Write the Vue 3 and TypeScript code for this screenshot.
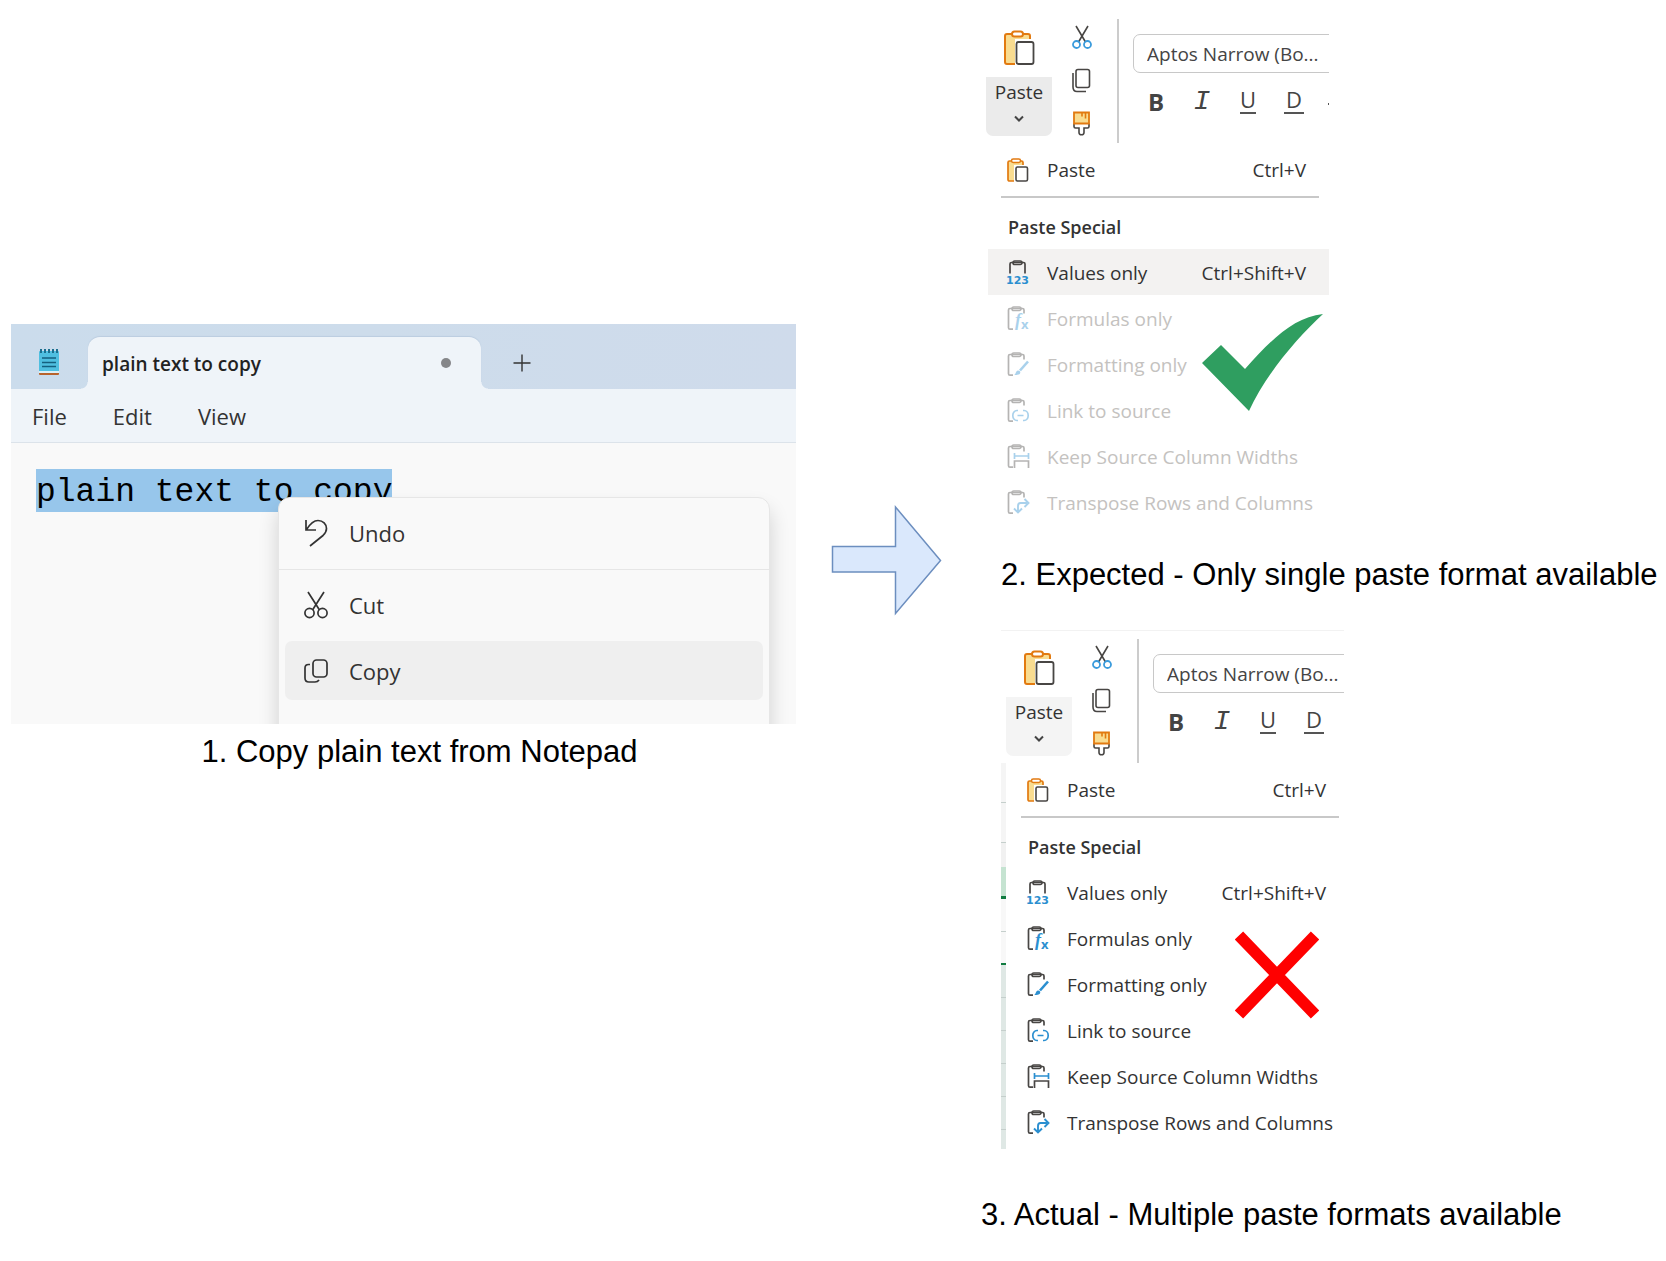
<script setup lang="ts">
type IconName = 'values' | 'formulas' | 'formatting' | 'link' | 'widths' | 'transpose'

interface PasteOption {
  icon: IconName
  label: string
  shortcut?: string
}

interface Panel {
  id: string
  caption: string
  single: boolean
}

const options: PasteOption[] = [
  { icon: 'values', label: 'Values only', shortcut: 'Ctrl+Shift+V' },
  { icon: 'formulas', label: 'Formulas only' },
  { icon: 'formatting', label: 'Formatting only' },
  { icon: 'link', label: 'Link to source' },
  { icon: 'widths', label: 'Keep Source Column Widths' },
  { icon: 'transpose', label: 'Transpose Rows and Columns' },
]

const panels: Panel[] = [
  { id: 'expected', caption: '2. Expected - Only single paste format available', single: true },
  { id: 'actual', caption: '3. Actual - Multiple paste formats available', single: false },
]
</script>

<template>
  <main class="page">
    <figure class="copy-step">
      <div class="notepad">
        <div class="titlebar">
          <svg class="app-icon" width="22" height="28" viewBox="0 0 22 28" aria-hidden="true">
            <rect x="1" y="23" width="20" height="4" rx="1" fill="#b8632c" />
            <rect x="1" y="3" width="20" height="22" rx="1" fill="#4fbfe0" />
            <path d="M1 23h20v2H1z" fill="#d8eff7" />
            <path d="M3 1v4M7 1v4M11 1v4M15 1v4M19 1v4" stroke="#1c6f8f" stroke-width="2" />
            <path d="M4 10h14M4 14.500h14M4 18.500h14" stroke="#14607f" stroke-width="1.600" />
          </svg>
          <div class="tab">
            <span>plain text to copy</span>
            <i class="unsaved"></i>
          </div>
          <button class="new-tab" aria-label="New tab">
            <svg width="18" height="18" viewBox="0 0 18 18"><path d="M9 .5v17M.5 9h17" stroke="#333" stroke-width="1.400" /></svg>
          </button>
        </div>
        <nav class="menubar">
          <button>File</button>
          <button>Edit</button>
          <button>View</button>
        </nav>
        <div class="editor">
          <span class="selection">plain text to copy</span>
          <div class="context" role="menu">
            <div class="group">
              <button role="menuitem">
                <svg width="24" height="28" viewBox="0 0 24 28"><path d="M2 1v10h10M2.500 10.500C6 5 9 1.500 14 1.500c5 0 8.500 3.500 8.500 8 0 3-1.500 5-3.500 7L6 27" /></svg>
                Undo
              </button>
            </div>
            <div class="group">
              <button role="menuitem">
                <svg width="24" height="28" viewBox="0 0 24 28"><path d="M4 1l11.500 18M20 1L8.500 19" /><circle cx="5.500" cy="22" r="4.600" /><circle cx="18.500" cy="22" r="4.600" /></svg>
                Cut
              </button>
              <button role="menuitem" class="hovered">
                <svg width="24" height="28" viewBox="0 0 24 28"><rect x="9" y="3" width="14" height="17" rx="3.500" /><path d="M6 7.500H4.500C2.500 7.500 1 9 1 11v10c0 2.500 1.500 4 4 4h6c2 0 3-.5 4-2" /></svg>
                Copy
              </button>
            </div>
          </div>
        </div>
      </div>
      <figcaption>1. Copy plain text from Notepad</figcaption>
    </figure>

    <svg class="arrow" width="111" height="112" viewBox="0 0 111 112" aria-hidden="true">
      <path d="M1.500 42.500H64.500V3L109.500 56.500 64.500 109.500V68H1.500z" fill="#dae8fc" stroke="#6c8ebf" stroke-width="1.500" />
    </svg>

    <div class="results">
      <figure v-for="panel in panels" :key="panel.id" :class="['result', panel.id]">
        <div class="panel">
          <div v-if="!panel.single" class="sheet">
            <i v-for="n in 10" :key="n"></i>
          </div>
          <div class="content">
            <div class="ribbon">
              <div class="paste">
                <button class="paste-main" aria-label="Paste">
                  <svg width="32" height="36" viewBox="0 0 32 36">
                    <rect x="2" y="4" width="25" height="30" rx="2" fill="#f9dc90" stroke="#e27a10" stroke-width="2" />
                    <rect x="9" y="1.500" width="11" height="5" rx="2.500" fill="#fff" stroke="#e27a10" stroke-width="2" />
                    <rect x="12" y="9" width="20" height="27" fill="#fff" />
                    <rect x="13.500" y="12" width="17" height="22" rx="2" fill="#fff" stroke="#484644" stroke-width="1.800" />
                  </svg>
                </button>
                <button class="paste-menu">
                  Paste
                  <svg width="10" height="8" viewBox="0 0 10 8"><path d="M1 1.500l4 4 4-4" fill="none" stroke="#444" stroke-width="2" /></svg>
                </button>
              </div>
              <div class="clip-tools">
                <button aria-label="Cut">
                  <svg width="20" height="25" viewBox="0 0 20 25">
                    <path d="M4 1l9.500 16M16 1L6.500 17" stroke="#484644" stroke-width="1.600" />
                    <circle cx="4.500" cy="19.500" r="3.500" fill="#fff" stroke="#3a9bdc" stroke-width="1.800" />
                    <circle cx="15.500" cy="19.500" r="3.500" fill="#fff" stroke="#3a9bdc" stroke-width="1.800" />
                  </svg>
                </button>
                <button aria-label="Copy">
                  <svg width="20" height="25" viewBox="0 0 20 25" fill="none" stroke="#484644" stroke-width="1.600">
                    <rect x="4" y="1.500" width="13.500" height="18" rx="2" />
                    <path d="M1 5v14c0 2.500 1.500 4.500 4 4.500h9" />
                  </svg>
                </button>
                <button aria-label="Format Painter">
                  <svg width="20" height="25" viewBox="0 0 20 25">
                    <path d="M2 12.500v3c0 1 .7 1.500 1.500 1.500H7v4.500c0 1.500 1 2.300 2.500 2.300s2.500-.8 2.500-2.300V17h3.500c.8 0 1.500-.5 1.500-1.500v-3" fill="#fff" stroke="#484644" stroke-width="1.600" />
                    <path d="M2 1.500h15v11H2z" fill="#f9dc90" stroke="#e27a10" stroke-width="1.800" />
                    <path d="M10 1.500v4M13.500 1.500v6" stroke="#e27a10" stroke-width="1.600" />
                  </svg>
                </button>
              </div>
              <div class="font-tools">
                <select class="font-name" aria-label="Font">
                  <option>Aptos Narrow (Bo...</option>
                </select>
                <div class="styles">
                  <button class="bold">B</button>
                  <button class="italic">I</button>
                  <button class="underline"><span>U</span></button>
                  <button class="double"><span>D</span></button>
                  <button aria-label="Strikethrough">
                    <svg width="24" height="24" viewBox="0 0 24 24"><path d="M0 14h24" stroke="#555" stroke-width="2" /></svg>
                  </button>
                </div>
              </div>
            </div>

            <div class="menu" role="menu">
              <button class="item first" role="menuitem">
                <svg width="24" height="24" viewBox="0 0 24 24">
                  <rect x="2" y="3" width="15" height="20" rx="1.500" fill="#f9dc90" stroke="#e27a10" stroke-width="1.700" />
                  <rect x="5.500" y="1" width="9" height="3.500" rx="1.700" fill="#fff" stroke="#e27a10" stroke-width="1.500" />
                  <rect x="8" y="7" width="16" height="17" fill="#fff" />
                  <rect x="10" y="9" width="11.500" height="14" rx="1.500" fill="#fff" stroke="#484644" stroke-width="1.600" />
                </svg>
                <span>Paste</span>
                <kbd>Ctrl+V</kbd>
              </button>
              <hr />
              <h3>Paste Special</h3>
              <button
                v-for="(option, index) in options"
                :key="option.icon"
                :class="['item', 'option', { hovered: panel.single && index === 0 }]"
                :disabled="panel.single && index > 0"
                role="menuitem"
              >
                <svg class="special" width="24" height="24" viewBox="0 0 24 24">
                  <template v-if="option.icon === 'values'">
                    <path d="M4 13.500V4c0-1 .5-1.500 1.500-1.500h12c1 0 1.500.5 1.500 1.500v9.500" />
                    <rect x="7" y="1" width="9" height="3.500" rx="1.700" />
                    <text x="0" y="24" class="digits">123</text>
                  </template>
                  <template v-else>
                    <path d="M7 23.200H4c-1 0-1.500-.5-1.500-1.500V4c0-1 .5-1.500 1.500-1.500h12.500c1 0 1.500.5 1.500 1.500v3.500" />
                    <rect x="6" y="1" width="9" height="3.500" rx="1.700" />
                  </template>
                  <text v-if="option.icon === 'formulas'" x="9" y="20" class="fx">f<tspan class="sub" dy="3">x</tspan></text>
                  <g v-if="option.icon === 'formatting'" class="accent">
                    <path d="M22 9.500l-8 9" stroke-width="2.600" />
                    <path d="M8 23c2 0 1.500-4.500 4-4.500 2 0 2.800 1.500 2 3-.8 1.300-3 1.500-6 1.500z" class="solid" />
                  </g>
                  <g v-if="option.icon === 'link'" class="accent">
                    <path d="M12 12.500h-1c-2.500 0-4.200 2.200-4.200 5s1.700 5 4.200 5h1M17 12.500h1c2.500 0 4.200 2.200 4.200 5s-1.700 5-4.200 5h-1M11.500 17.500h6" />
                  </g>
                  <template v-if="option.icon === 'widths'">
                    <path d="M8.500 24v-7h14v7" />
                    <path class="accent" d="M8.500 9v6M22.500 9v6M8.500 12h14" />
                  </template>
                  <g v-if="option.icon === 'transpose'" class="accent">
                    <path d="M12 21.500V16c0-2 .8-3 2.500-3H21M18.500 9l4 4-4 4M8 18.500l4 4 4-4" stroke-width="1.900" />
                  </g>
                </svg>
                <span>{{ option.label }}</span>
                <kbd v-if="option.shortcut">{{ option.shortcut }}</kbd>
              </button>
            </div>
          </div>

          <svg v-if="panel.single" class="verdict check" width="122" height="98" viewBox="0 0 122 98" aria-label="Correct">
            <path d="M0 49l19-18 24 24C67 28 91 3 121 0 95 24 64 60 47 97z" fill="#2f9e60" />
          </svg>
          <svg v-else class="verdict cross" width="84" height="88" viewBox="0 0 84 88" aria-label="Incorrect">
            <path d="M4 4.500l76 79M80 4.500l-76 79" stroke="#f00" stroke-width="11.500" />
          </svg>
        </div>
        <figcaption>{{ panel.caption }}</figcaption>
      </figure>
    </div>
  </main>
</template>

<style>
body {
  margin: 0;
  background: #fff;
}
</style>

<style scoped>
.page {
  display: grid;
  grid-template-columns: minmax(0, 1fr) 115px 685px;
  column-gap: 35px;
  align-items: start;
  padding: 10px 0 16px 11px;
  overflow: hidden;
  color: #333;
  font-family: "Open Sans", "Noto Sans", sans-serif;
}
button {
  display: flex;
  flex: none;
  align-items: center;
  margin: 0;
  padding: 0;
  border: 0;
  background: none;
  color: inherit;
  font: inherit;
  text-align: left;
}
svg {
  display: block;
  flex: none;
}
figure {
  margin: 0;
}
figcaption {
  color: #000;
  font: 31px/36px "Liberation Sans", Arial, sans-serif;
  white-space: nowrap;
}

/* Notepad window */
.copy-step {
  margin-top: 314px;
}
.copy-step figcaption {
  margin: 10px 0 0 32px;
  text-align: center;
}
.notepad {
  background: #f9f9f9;
}
.titlebar {
  display: flex;
  align-items: flex-end;
  height: 65px;
  background: linear-gradient(90deg, #cbdcec, #cddceb 45%, #cfdbeb);
}
.app-icon {
  margin: 0 28px 13px 27px;
}
.tab {
  position: relative;
  display: flex;
  align-items: center;
  justify-content: space-between;
  box-sizing: border-box;
  width: 393px;
  height: 52px;
  padding: 0 30px 0 14px;
  border-radius: 12px 12px 0 0;
  background: #eff4f9;
  box-shadow: 0 -1px 1px #bccde0;
  color: #222;
  font-size: 19px;
  font-weight: 600;
}
.tab span {
  padding-top: 2px;
}
.tab::before,
.tab::after {
  content: "";
  position: absolute;
  bottom: 0;
  width: 7px;
  height: 7px;
}
.tab::before {
  right: 100%;
  background: radial-gradient(circle at 0 0, transparent 6px, #eff4f9 7px);
}
.tab::after {
  left: 100%;
  background: radial-gradient(circle at 100% 0, transparent 6px, #eff4f9 7px);
}
.unsaved {
  width: 10px;
  height: 10px;
  border-radius: 50%;
  background: #858689;
}
.new-tab {
  justify-content: center;
  width: 67px;
  height: 52px;
  margin-left: 7px;
}
.menubar {
  display: flex;
  gap: 46px;
  height: 53px;
  padding-left: 21px;
  border-bottom: 1px solid #dce3ea;
  background: #eff4f9;
  font-size: 22px;
}
.editor {
  position: relative;
  box-sizing: border-box;
  min-height: 281px;
  padding: 26px 25px;
  overflow: hidden;
}
.selection {
  display: inline-block;
  padding-top: 4px;
  background: #97c6eb;
  color: #000;
  font: 33px/39px "Liberation Mono", monospace;
  white-space: nowrap;
}
.context {
  position: absolute;
  top: 54px;
  right: 26px;
  left: 267px;
  height: 260px;
  border: 1px solid #e6e6e6;
  border-radius: 12px;
  background: #f9f9f9;
  box-shadow: 0 12px 20px rgba(0, 0, 0, 0.16);
  font-size: 22px;
}
.group {
  padding: 5px 6px 7px;
}
.group + .group {
  border-top: 1px solid #e6e6e6;
}
.group button {
  gap: 21px;
  box-sizing: border-box;
  width: 100%;
  height: 59px;
  padding-left: 19px;
  border-radius: 7px;
}
.group + .group button + button {
  margin-top: 7px;
}
.group svg {
  fill: none;
  stroke: #333;
  stroke-width: 1.7;
}
.hovered {
  background: #efefef;
}

.arrow {
  margin-top: 494px;
}

/* Paste menus */
.panel {
  position: relative;
  display: flex;
  box-sizing: border-box;
  width: 343px;
  height: 519px;
  border-top: 1px solid transparent;
}
.expected .panel {
  margin-left: 5px;
}
.expected figcaption {
  margin: 28px 0 37px 20px;
}
.actual .panel {
  margin-left: 20px;
  border-color: #f2f2f2;
}
.actual figcaption {
  margin-top: 48px;
}
.sheet {
  display: flex;
  flex-direction: column;
  width: 5px;
  margin-top: 132px;
  background: #dfe8e5;
}
.sheet i {
  box-sizing: border-box;
  height: 33px;
  border-bottom: 1px solid #c5cfcc;
}
.sheet i:nth-child(-n + 2) {
  height: 40px;
  background: #f5f5f5;
}
.sheet i:nth-child(3) {
  height: 56px;
  border-bottom: 3px solid #107c41;
  background: linear-gradient(#f1f1f1 24px, #c5e3d1 24px);
}
.sheet i:nth-child(4) {
  background: #f8f8f8;
}
.sheet i:nth-child(5) {
  border-bottom: 2px solid #107c41;
  background: #f8f8f8;
}
.content {
  flex: 1;
  min-width: 0;
  padding-top: 8px;
  overflow: hidden;
}
.ribbon {
  display: flex;
  height: 124px;
}
.paste {
  flex: none;
  width: 66px;
}
.paste-main {
  justify-content: center;
  width: 100%;
  height: 58px;
}
.paste-menu {
  flex-direction: column;
  gap: 10px;
  width: 100%;
  height: 59px;
  padding-top: 2px;
  border-radius: 0 0 7px 7px;
  background: #ebebeb;
  font-size: 19px;
  line-height: 26px;
}
.actual .paste-menu {
  background: #f4f4f4;
}
.clip-tools {
  display: flex;
  flex: none;
  flex-direction: column;
  gap: 18px;
  padding: 6px 25px 0 20px;
  border-right: 2px solid #ccc;
}
.font-tools {
  flex: none;
  width: 230px;
  padding: 15px 0 0 14px;
}
.font-name {
  display: block;
  box-sizing: border-box;
  width: 100%;
  height: 39px;
  padding: 2px 0 0 13px;
  border: 1px solid #c8c8c8;
  border-radius: 7px;
  appearance: none;
  background: #fff;
  color: #444;
  font: 19px/35px "Open Sans", "Noto Sans", sans-serif;
}
.styles {
  display: flex;
  gap: 16px;
  margin-top: 15px;
  padding-left: 8px;
  color: #444;
  line-height: 28px;
}
.styles button {
  justify-content: center;
  width: 30px;
  height: 28px;
}
.bold {
  font-size: 24px;
  font-weight: 700;
}
.italic {
  font-family: "Liberation Mono", monospace;
  font-size: 28px;
  font-style: italic;
}
.underline span,
.double span {
  height: 21px;
  border-bottom: 2px solid #555;
  font-size: 22px;
  line-height: 16px;
  text-align: center;
}
.double span {
  width: 20px;
}
.menu {
  margin-left: 2px;
}
.item {
  box-sizing: border-box;
  width: 100%;
  height: 46px;
  padding: 0 23px 0 18px;
  font-size: 19px;
  white-space: nowrap;
}
.actual .item {
  padding-right: 18px;
}
.item svg {
  margin-right: 17px;
}
.option span,
.option kbd {
  padding-top: 2px;
}
.item.hovered {
  background: #f3f2f1;
}
.item:disabled {
  color: #c4c2c0;
}
.item.first {
  height: 53px;
}
kbd {
  margin-left: auto;
  font: inherit;
}
hr {
  height: 2px;
  margin: 0 10px 0 13px;
  border: 0;
  background: #c8c8c8;
}
.actual hr {
  margin-right: 5px;
}
h3 {
  margin: 0;
  padding: 7px 20px 0;
  font-size: 18px;
  font-weight: 600;
  line-height: 44px;
}
.special {
  overflow: visible;
  fill: none;
  stroke: #484644;
  stroke-width: 1.7;
}
.accent {
  stroke: #2b8fd0;
}
.solid {
  fill: #2b8fd0;
  stroke: none;
}
.special text {
  fill: #2b8fd0;
  stroke: none;
}
.digits {
  font: 700 11px "DejaVu Sans", sans-serif;
}
.fx {
  font: italic 700 18px "Liberation Serif", serif;
}
.sub {
  font: 700 13px "Open Sans", sans-serif;
}
.item:disabled .special {
  opacity: 0.4;
}
.verdict {
  position: absolute;
}
.check {
  top: 303px;
  left: 216px;
}
.cross {
  top: 300px;
  left: 234px;
}
</style>
